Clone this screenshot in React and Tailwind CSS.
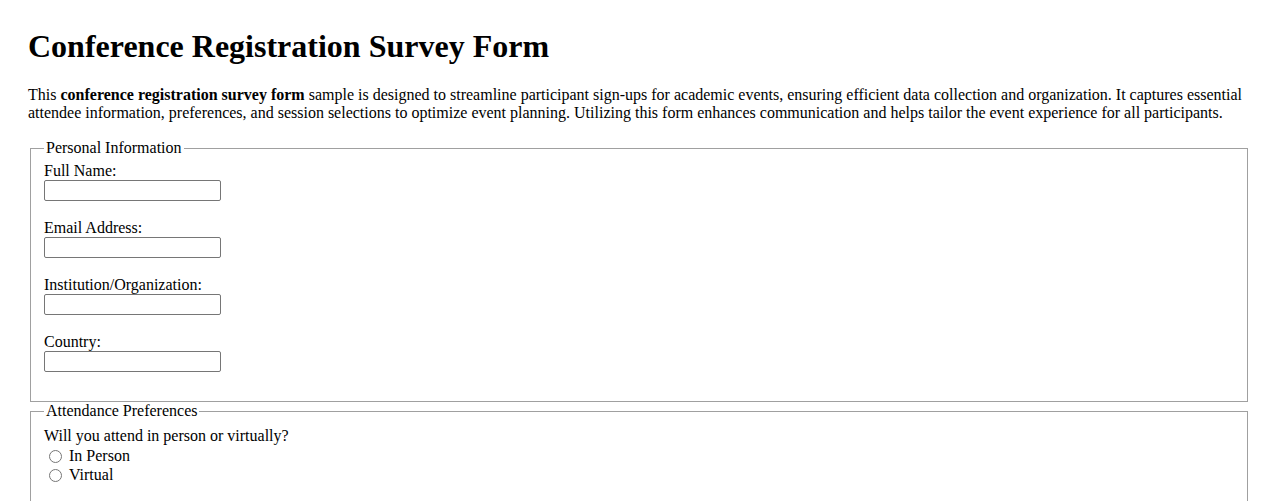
export default function App() {
  const fields = [
    "Full Name:",
    "Email Address:",
    "Institution/Organization:",
    "Country:",
  ];

  return (
    <div
      className="bg-white text-black px-[28px] pt-[28px] pb-8 text-[16px] leading-[18.4px]"
      style={{ fontFamily: '"Liberation Serif", "Times New Roman", serif' }}
    >
      <h1 className="text-[32px] leading-[37px] font-bold mb-[21px]">
        Conference Registration Survey Form
      </h1>

      <p className="mb-[16px]">
        This <strong>conference registration survey form</strong> sample is
        designed to streamline participant sign-ups for academic events,
        ensuring efficient data collection and organization. It captures
        essential attendee information, preferences, and session selections to
        optimize event planning. Utilizing this form enhances communication and
        helps tailor the event experience for all participants.
      </p>

      <form>
        {/* Personal Information */}
        <fieldset className="mx-[2px] border border-[#a0a0a0] pl-[13px] pr-[12px] pt-[5px] pb-[11px]">
          <legend className="px-[2px]">Personal Information</legend>
          {fields.map((f) => (
            <div key={f} className="flex flex-col items-start mb-[18px]">
              <label className="block h-[18px]">{f}</label>
              <input
                type="text"
                className="w-[177px] h-[21px] border border-[#767676] rounded-[2px] bg-white"
              />
            </div>
          ))}
        </fieldset>

        {/* Attendance Preferences */}
        <fieldset className="mx-[2px] border border-[#a0a0a0] pl-[13px] pr-[12px] pt-[6px] pb-[10px]">
          <legend className="px-[2px]">Attendance Preferences</legend>
          <div>Will you attend in person or virtually?</div>
          <label className="flex items-center h-[20px] mt-[1px]">
            <input
              type="radio"
              name="attend"
              className="w-[13px] h-[13px] ml-[5px] mr-[7px]"
            />
            In Person
          </label>
          <label className="flex items-center h-[19px]">
            <input
              type="radio"
              name="attend"
              className="w-[13px] h-[13px] ml-[5px] mr-[7px]"
            />
            Virtual
          </label>
          <div className="h-[40px]" />
        </fieldset>
      </form>
    </div>
  );
}
